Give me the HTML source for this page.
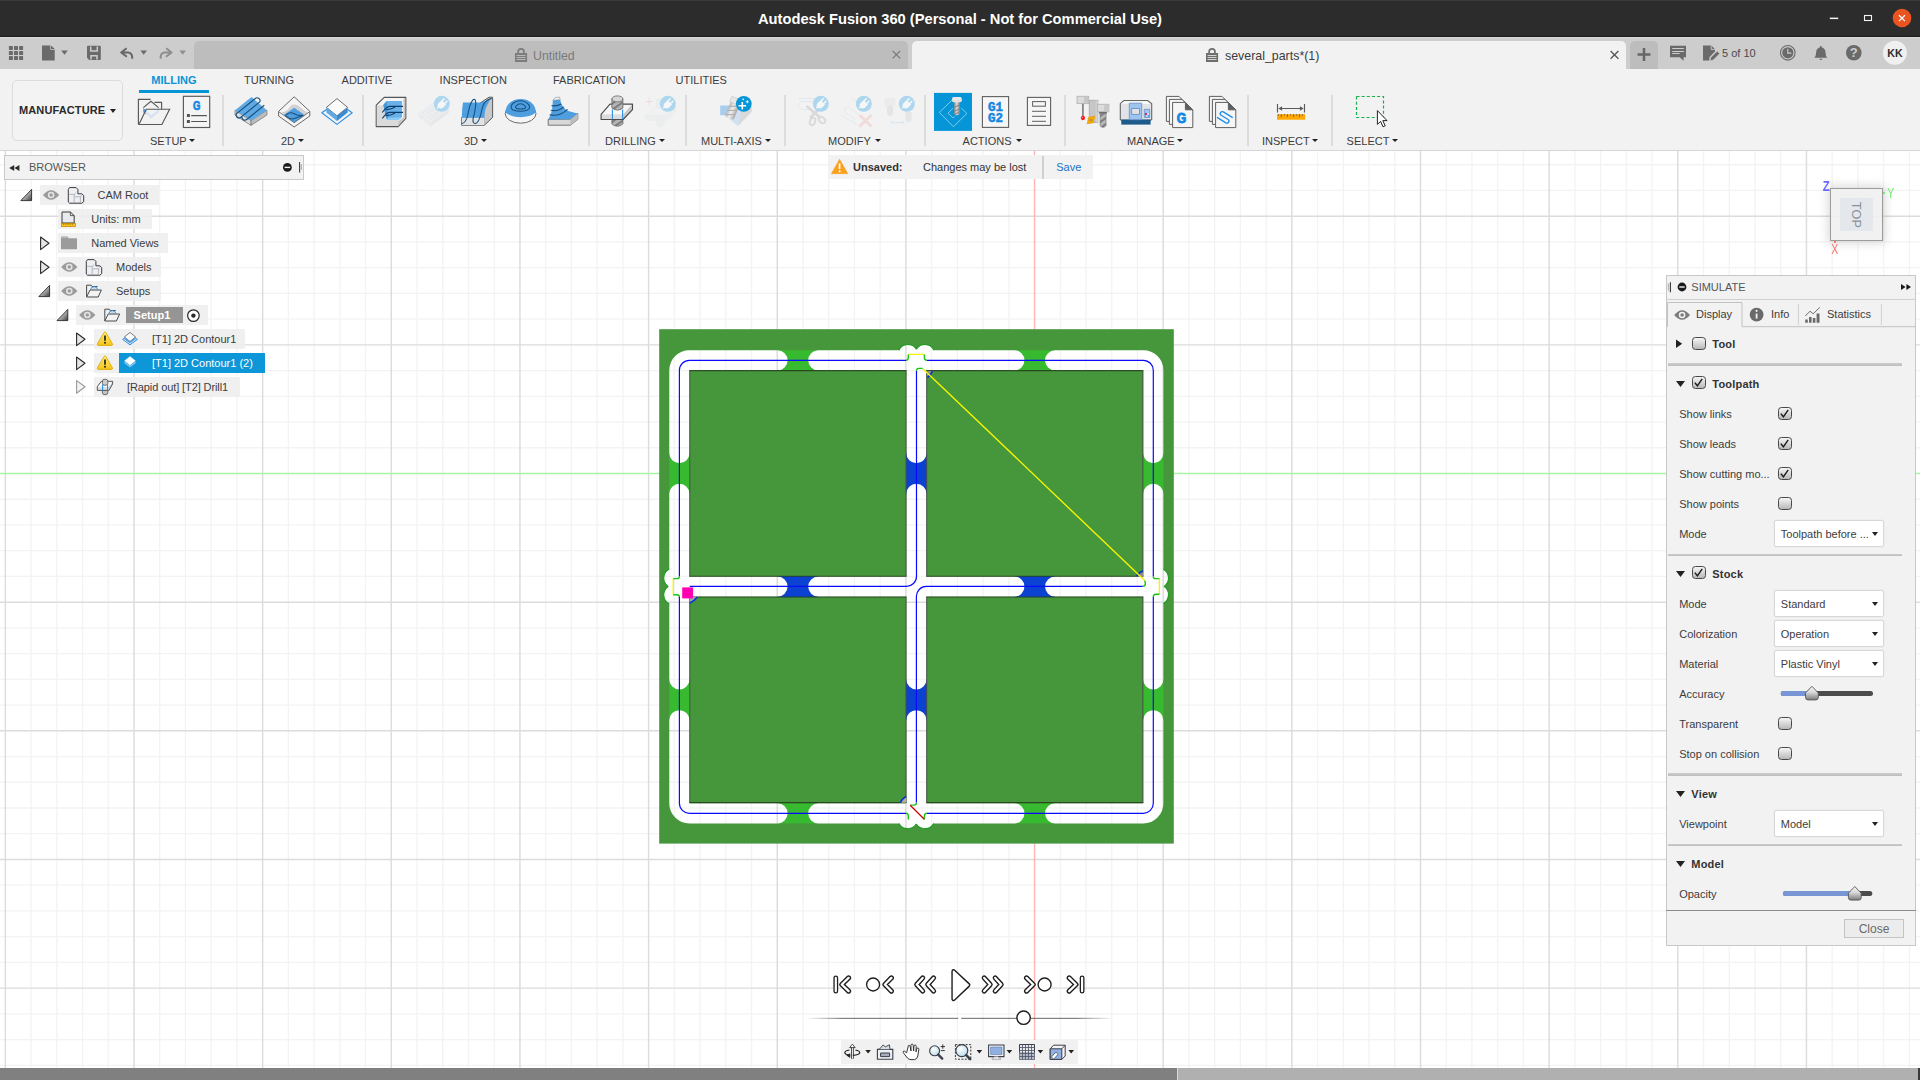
<!DOCTYPE html>
<html><head><meta charset="utf-8"><title>Fusion</title>
<style>
html,body{margin:0;padding:0;}
body{width:1920px;height:1080px;overflow:hidden;background:#fff;position:relative;font-family:"Liberation Sans",sans-serif;font-size:11px;color:#3c3c3c;}
.abs{position:absolute;}
svg{position:absolute;overflow:visible;}
#canvas{left:0;top:0;width:1920px;height:1080px;}
/* title bar */
#titlebar{position:absolute;left:0;top:0;width:1920px;height:37px;background:#2c2c2c;box-sizing:border-box;border-bottom:1px solid #1c1c1c;box-shadow:inset 0 1px 0 #3c3c3c;}
#titlebar .t{position:absolute;left:0;top:10px;width:1920px;text-align:center;color:#fff;font-weight:bold;font-size:14.7px;line-height:18px;}
/* tab bar */
#tabbar{position:absolute;left:0;top:37px;width:1920px;height:32px;background:#cdcdcd;box-shadow:inset 0 1px 0 #d8d8d8;}
.tab{position:absolute;top:4px;height:28px;border-radius:5px 5px 0 0;}
/* toolbar */
#toolbar{position:absolute;left:0;top:69px;width:1920px;height:81px;background:#f2f2f2;border-bottom:1px solid #d6d6d6;}
.tl{position:absolute;white-space:nowrap;line-height:13px;font-size:11px;color:#3c3c3c;}
.sep{position:absolute;top:26px;height:51px;width:2px;background:#dcdcdc;}
.arr{position:absolute;width:0;height:0;border-left:3px solid transparent;border-right:3px solid transparent;border-top:3.5px solid #222;}
/* browser */
#brhead{position:absolute;left:4px;top:155px;width:300px;height:25px;background:#f2f2f2;border:1px solid #c9c9c9;box-sizing:border-box;}
.rowbg{position:absolute;height:19.5px;background:rgba(238,238,238,.88);}
.rt{position:absolute;white-space:nowrap;font-size:11px;line-height:13px;color:#3c3c3c;}
/* simulate panel */
#sim{position:absolute;left:1666px;top:275px;width:250px;height:671.300px;background:#f2f2f2;border:1px solid #c8c8c8;box-sizing:border-box;}
.sl{position:absolute;white-space:nowrap;font-size:11px;line-height:13px;color:#3c3c3c;}
.sb{font-weight:bold;color:#333;letter-spacing:.2px}
.ck{position:absolute;width:13.600px;height:13px;box-sizing:border-box;border:1.400px solid #484848;border-radius:3.400px;background:linear-gradient(#f6f6f6,#b8b8b8);}
.dd{position:absolute;left:1773.500px;width:110px;height:27px;box-sizing:border-box;border:1.500px solid #d8d8d8;border-radius:2.200px;background:#fff;box-shadow:0 0 0 .500px #e8e8e8;}
.dd span{position:absolute;left:6.300px;top:6.500px;font-size:11px;line-height:13px;color:#3c3c3c;white-space:nowrap}
.dd i{position:absolute;right:4.800px;top:10.500px;width:0;height:0;border-left:3px solid transparent;border-right:3px solid transparent;border-top:4px solid #222;}
.hsep{position:absolute;left:1668px;width:233.500px;height:2.600px;background:linear-gradient(#cdcdcd,#bdbdbd);}

</style></head>
<body>
<svg id="canvas" width="1920" height="1080" viewBox="0 0 1920 1080">
<path d="M31.08 151V1068M56.81 151V1068M82.54 151V1068M108.27 151V1068M159.73 151V1068M185.46 151V1068M211.19 151V1068M236.92 151V1068M288.38 151V1068M314.11 151V1068M339.84 151V1068M365.57 151V1068M417.03 151V1068M442.76 151V1068M468.49 151V1068M494.22 151V1068M545.68 151V1068M571.41 151V1068M597.14 151V1068M622.87 151V1068M674.33 151V1068M700.06 151V1068M725.79 151V1068M751.52 151V1068M802.98 151V1068M828.71 151V1068M854.44 151V1068M880.17 151V1068M931.63 151V1068M957.36 151V1068M983.09 151V1068M1008.82 151V1068M1060.28 151V1068M1086.01 151V1068M1111.74 151V1068M1137.47 151V1068M1188.93 151V1068M1214.66 151V1068M1240.39 151V1068M1266.12 151V1068M1317.58 151V1068M1343.31 151V1068M1369.04 151V1068M1394.77 151V1068M1446.23 151V1068M1471.96 151V1068M1497.69 151V1068M1523.42 151V1068M1574.88 151V1068M1600.61 151V1068M1626.34 151V1068M1652.07 151V1068M1703.53 151V1068M1729.26 151V1068M1754.99 151V1068M1780.72 151V1068M1832.18 151V1068M1857.91 151V1068M1883.64 151V1068M1909.37 151V1068M0 164.74H1920M0 190.47H1920M0 241.93H1920M0 267.66H1920M0 293.39H1920M0 319.12H1920M0 370.58H1920M0 396.31H1920M0 422.04H1920M0 447.77H1920M0 499.23H1920M0 524.96H1920M0 550.69H1920M0 576.42H1920M0 627.88H1920M0 653.61H1920M0 679.34H1920M0 705.07H1920M0 756.53H1920M0 782.26H1920M0 807.99H1920M0 833.72H1920M0 885.18H1920M0 910.91H1920M0 936.64H1920M0 962.37H1920M0 1013.83H1920M0 1039.56H1920M0 1065.29H1920" stroke="#f3f3f3" stroke-width="1.3" fill="none"/>
<path d="M5.35 151V1068M134 151V1068M262.65 151V1068M391.3 151V1068M519.95 151V1068M648.6 151V1068M777.25 151V1068M905.9 151V1068M1163.2 151V1068M1291.85 151V1068M1420.5 151V1068M1549.15 151V1068M1677.8 151V1068M1806.45 151V1068M0 216.2H1920M0 344.85H1920M0 602.15H1920M0 730.8H1920M0 859.45H1920M0 988.1H1920" stroke="#dcdcdc" stroke-width="1.45" fill="none"/>
<path d="M1034.55 151V1068" stroke="#ffb3b3" stroke-width="1.4" fill="none"/>
<path d="M0 473.5H1920" stroke="#a6f5a6" stroke-width="1.4" fill="none"/>
<defs><mask id="cut" maskUnits="userSpaceOnUse" x="650" y="320" width="540" height="540">
<rect x="650" y="320" width="540" height="540" fill="#fff"/>
<path d="M679.4 453.05V370.3A10 10 0 0 1 689.4 360.3H777.5M1055.15 360.3H1143.3A10 10 0 0 1 1153.3 370.3V453.05M1153.3 720.25V803.3A10 10 0 0 1 1143.3 813.3H1055.15M777.5 813.3H689.4A10 10 0 0 1 679.4 803.3V720.25M818.3 360.3H1014.35M818.3 813.3H1014.35M679.4 493.85V679.45M1153.3 493.85V679.45M679.4 586.6H777.5M818.3 586.6H1014.35M1055.15 586.6H1153.3M916.4 360.3V453.05M916.4 493.85V679.45M916.4 720.25V813.3" stroke="#000" stroke-width="20.2" stroke-linecap="round" fill="none"/>
<circle cx="907.9" cy="354.6" r="10.1" fill="#000"/>
<circle cx="924.9" cy="354.6" r="10.1" fill="#000"/>
<circle cx="907.8" cy="818.6" r="10.1" fill="#000"/>
<circle cx="924.8" cy="818.6" r="10.1" fill="#000"/>
<circle cx="673.8" cy="578.1" r="10.1" fill="#000"/>
<circle cx="673.8" cy="594.8" r="10.1" fill="#000"/>
<circle cx="1158.4" cy="578.1" r="10.1" fill="#000"/>
<circle cx="1158.4" cy="594.7" r="10.1" fill="#000"/>
</mask></defs>
<g mask="url(#cut)">
<rect x="659.2" y="329.2" width="514.6" height="514.4" fill="#46963c"/>
<rect x="777.5" y="350.2" width="40.8" height="20.2" fill="#37ba2f"/>
<rect x="1014.35" y="350.2" width="40.8" height="20.2" fill="#37ba2f"/>
<rect x="777.5" y="576.1" width="40.8" height="21" fill="#0c42d2"/>
<rect x="1014.35" y="576.1" width="40.8" height="21" fill="#0c42d2"/>
<rect x="777.5" y="803.2" width="40.8" height="20.2" fill="#37ba2f"/>
<rect x="1014.35" y="803.2" width="40.8" height="20.2" fill="#37ba2f"/>
<rect x="669.3" y="453.05" width="20.2" height="40.8" fill="#37ba2f"/>
<rect x="669.3" y="679.45" width="20.2" height="40.8" fill="#37ba2f"/>
<rect x="905.9" y="453.05" width="21" height="40.8" fill="#0c42d2"/>
<rect x="905.9" y="679.45" width="21" height="40.8" fill="#0c42d2"/>
<rect x="1143.2" y="453.05" width="20.2" height="40.8" fill="#37ba2f"/>
<rect x="1143.2" y="679.45" width="20.2" height="40.8" fill="#37ba2f"/>
</g>
<path d="M689.4 370.65H906.4M689.4 576.25H906.4" stroke="#24401c" stroke-width="1.1" stroke-opacity=".9" fill="none"/>
<path d="M689.75 370.3V576.6M906.05 370.3V576.6" stroke="#4a5046" stroke-width="1.1" stroke-opacity=".85" fill="none"/>
<path d="M689.4 597.05H906.4M689.4 802.65H906.4" stroke="#24401c" stroke-width="1.1" stroke-opacity=".9" fill="none"/>
<path d="M689.75 596.7V803M906.05 596.7V803" stroke="#4a5046" stroke-width="1.1" stroke-opacity=".85" fill="none"/>
<path d="M926.3 370.65H1143.2M926.3 576.25H1143.2" stroke="#24401c" stroke-width="1.1" stroke-opacity=".9" fill="none"/>
<path d="M926.65 370.3V576.6M1142.85 370.3V576.6" stroke="#4a5046" stroke-width="1.1" stroke-opacity=".85" fill="none"/>
<path d="M926.3 597.05H1143.2M926.3 802.65H1143.2" stroke="#24401c" stroke-width="1.1" stroke-opacity=".9" fill="none"/>
<path d="M926.65 596.7V803M1142.85 596.7V803" stroke="#4a5046" stroke-width="1.1" stroke-opacity=".85" fill="none"/>
<g fill="none" stroke="#1e9e1e" stroke-width="1.15">
<path d="M898.81 350.2A10.1 10.1 0 0 1 916.4 349.14"/>
<path d="M916.4 349.14A10.1 10.1 0 0 1 933.99 350.2"/>
<path d="M916.3 824.06A10.1 10.1 0 0 1 898.91 823.4"/>
<path d="M933.69 823.4A10.1 10.1 0 0 1 916.3 824.06"/>
<path d="M668.12 586.45A10.1 10.1 0 0 1 669.3 569.06"/>
<path d="M669.3 603.84A10.1 10.1 0 0 1 668.12 586.45"/>
<path d="M1163.4 569.32A10.1 10.1 0 0 1 1164.15 586.4"/>
<path d="M1164.15 586.4A10.1 10.1 0 0 1 1163.4 603.48"/>
</g>
<path d="M906.2 360.3 H689.4 A10 10 0 0 0 679.4 370.3 V576.4M679.4 597 V803.3 A10 10 0 0 0 689.4 813.3 H906M926.7 813.3 H1143.3 A10 10 0 0 0 1153.3 803.3 V597M1153.3 576.4 V370.3 A10 10 0 0 0 1143.3 360.3 H926.7M916.5 370.8 V576.5 A10 10 0 0 1 906.4 586.4 H689.7M1142.8 586.4 H926.3 A10 10 0 0 0 916.4 596.7 V802.8" stroke="#0a0aff" stroke-width="1.2" fill="none"/>
<path d="M927 371H932.3Q931 375 927.3 377.5Z" fill="#8d8d8d"/><path d="M932.3 371Q931 375.5 927.3 377.5" stroke="#0a30d4" stroke-width="1.45" fill="none"/>
<path d="M1143 576.4V571Q1139 572.5 1136.5 576.4Z" fill="#8d8d8d"/><path d="M1143 571Q1138.5 572.5 1136.5 576.4" stroke="#0a30c0" stroke-width="1.45" fill="none"/>
<path d="M906.2 802.8V796.5Q902 799 900.5 802.8Z" fill="#b0b0a0"/><path d="M906.2 796.5Q901.5 799 900.5 802.8" stroke="#0a30d4" stroke-width="1.45" fill="none"/>
<path d="M689.8 597H697Q695 601 689.8 603Z" fill="#9aa"/><path d="M697 597.3Q694.5 601 689.8 603" stroke="#0a30d4" stroke-width="1.6" fill="none"/>
<path d="M908.3 354.4H924.4 M673.3 578.6V594.8 M1159.4 578.6V594.3 M922.6 368.4L1144.7 580.6" stroke="#f4f400" stroke-width="1.4" fill="none"/>
<path d="M908.3 354.4V357.6Q908.3 360.3 906.2 360.3M924.4 354.4V357.6Q924.4 360.3 926.7 360.3M916.5 370.8Q916.5 368.4 918.8 368.4H922.6M673.3 578.6H676.8Q679.4 578.6 679.4 576.4M673.3 594.8H676.8Q679.4 594.8 679.4 597M1159.4 578.6H1155.8Q1153.3 578.6 1153.3 576.4M1159.4 594.3H1155.8Q1153.3 594.5 1153.3 597M1142.8 586.4Q1145.4 586.2 1145.4 583.5L1144.7 580.6M916.5 802.8Q916.4 805 914 805.1H910.2M906 813.3Q908.3 813.4 908.3 816V819.5M926.7 813.3Q924.4 813.4 924.4 816V819.4" stroke="#19c419" stroke-width="1.4" fill="none"/>
<path d="M910.2 805.2L924.3 819.3" stroke="#cc0000" stroke-width="1.25" fill="none"/>
<rect x="682.2" y="587.4" width="10.9" height="11" fill="#ff00b3"/>
<defs><linearGradient id="gSl" x1="0" y1="0" x2="1" y2="0"><stop offset="0" stop-color="#666" stop-opacity="0"/><stop offset=".12" stop-color="#666" stop-opacity=".9"/><stop offset=".88" stop-color="#666" stop-opacity=".9"/><stop offset="1" stop-color="#666" stop-opacity="0"/></linearGradient></defs>
<rect x="806" y="1017.800" width="307" height="1.100" fill="url(#gSl)"/>
<rect x="958.300" y="1016" width="2.900" height="4" fill="#fff"/>
<path d="M835.8 977.8V991.2M1082.1 977.8V991.2" stroke="#1e1e1e" stroke-width="4.800" fill="none" stroke-linecap="round" stroke-linejoin="round"/>
<path d="M835.8 977.8V991.2M1082.1 977.8V991.2" stroke="#fff" stroke-width="2.200" fill="none" stroke-linecap="round" stroke-linejoin="round"/>
<path d="M848.6 977.9L841.8 984.5L848.6 991.1M891.4 977.9L884.9 984.5L891.4 991.1M1026.5 977.9L1033.2 984.5L1026.5 991.1M1069.2 977.9L1076 984.5L1069.2 991.1" stroke="#1e1e1e" stroke-width="5.100" fill="none" stroke-linecap="round" stroke-linejoin="round"/>
<path d="M848.6 977.9L841.8 984.5L848.6 991.1M891.4 977.9L884.9 984.5L891.4 991.1M1026.5 977.9L1033.2 984.5L1026.5 991.1M1069.2 977.9L1076 984.5L1069.2 991.1" stroke="#fff" stroke-width="2.300" fill="none" stroke-linecap="round" stroke-linejoin="round"/>
<path d="M922.7 977.9L916.7 984.5L922.7 991.1" stroke="#1e1e1e" stroke-width="5.100" fill="none" stroke-linecap="round" stroke-linejoin="round"/>
<path d="M922.7 977.9L916.7 984.5L922.7 991.1" stroke="#fff" stroke-width="2.300" fill="none" stroke-linecap="round" stroke-linejoin="round"/>
<path d="M933.6 977.9L927.7 984.5L933.6 991.1" stroke="#1e1e1e" stroke-width="5.100" fill="none" stroke-linecap="round" stroke-linejoin="round"/>
<path d="M933.6 977.9L927.7 984.5L933.6 991.1" stroke="#fff" stroke-width="2.300" fill="none" stroke-linecap="round" stroke-linejoin="round"/>
<path d="M984.2 977.9L990.2 984.5L984.2 991.1" stroke="#1e1e1e" stroke-width="5.100" fill="none" stroke-linecap="round" stroke-linejoin="round"/>
<path d="M984.2 977.9L990.2 984.5L984.2 991.1" stroke="#fff" stroke-width="2.300" fill="none" stroke-linecap="round" stroke-linejoin="round"/>
<path d="M995.2 977.9L1001.2 984.5L995.2 991.1" stroke="#1e1e1e" stroke-width="5.100" fill="none" stroke-linecap="round" stroke-linejoin="round"/>
<path d="M995.2 977.9L1001.2 984.5L995.2 991.1" stroke="#fff" stroke-width="2.300" fill="none" stroke-linecap="round" stroke-linejoin="round"/>
<circle cx="873.1" cy="984.500" r="6.500" fill="#fff" stroke="#1e1e1e" stroke-width="1.350"/>
<circle cx="1044.6" cy="984.500" r="6.500" fill="#fff" stroke="#1e1e1e" stroke-width="1.350"/>
<path d="M953.600 971.300L968.200 985L953.600 998.900Z" stroke="#1e1e1e" stroke-width="4.500" fill="#1e1e1e" stroke-linejoin="round"/>
<path d="M953.600 971.300L968.200 985L953.600 998.900Z" stroke="#fff" stroke-width="1.700" fill="#fff" stroke-linejoin="round"/>
<circle cx="1023.600" cy="1017.700" r="6.700" fill="#fff" stroke="#1e1e1e" stroke-width="1.400"/>

</svg>
<!-- titlebar.html -->
<div id="titlebar">
  <div class="t">Autodesk Fusion 360 (Personal - Not for Commercial Use)</div>
  <svg style="left:1820px;top:5px" width="100" height="28" viewBox="1820 5 100 28">
    <rect x="1829.800" y="17.600" width="8.400" height="1.500" fill="#f4f4f4"/>
    <rect x="1864.500" y="15.500" width="7" height="5" fill="none" stroke="#f4f4f4" stroke-width="1.100"/>
    <circle cx="1902" cy="18" r="9.3" fill="#e95420"/>
    <path d="M1899 15.200l5.900 5.900M1904.900 15.200l-5.900 5.900" stroke="#fff" stroke-width="1.250" fill="none"/>
  </svg>
</div>
<!-- tabbar.html -->
<div id="tabbar">
  <svg style="left:0;top:0" width="200" height="32" viewBox="0 37 200 32">
    <g fill="#6a6a6a">
      <!-- grid icon -->
<rect x="8.9" y="45.9" width="4" height="4" rx=".6"/><rect x="14.0" y="45.9" width="4" height="4" rx=".6"/><rect x="19.1" y="45.9" width="4" height="4" rx=".6"/>
<rect x="8.9" y="51.0" width="4" height="4" rx=".6"/><rect x="14.0" y="51.0" width="4" height="4" rx=".6"/><rect x="19.1" y="51.0" width="4" height="4" rx=".6"/>
<rect x="8.9" y="56.1" width="4" height="4" rx=".6"/><rect x="14.0" y="56.1" width="4" height="4" rx=".6"/><rect x="19.1" y="56.1" width="4" height="4" rx=".6"/>
      <!-- file icon -->
      <path d="M42 45.5h8.3v4.2h4.4v10.8h-12.7z M51 45.5l3.8 3.6h-3.8z"/>
      <path d="M61.2 50.6h6.6l-3.3 4.2z"/>
      <!-- save icon -->
      <path d="M88 45.800h11.800q1 0 1 1v12.100q0 1-1 1h-10.600l-2.200-2.200v-10.900q0-1 1-1z"/>
      <path d="M140.4 50.6h6.6l-3.3 4.2z"/>
    </g>
    <path d="M90.700 46.400v4.600h6.600v-4.600M91 59.600v-3.800h6v3.800" stroke="#cdcdcd" stroke-width="1.500" fill="none"/>
    <!-- undo -->
    <path d="M126.600 48.200l-5.400 4.300 5.600 4.300M121.800 52.500h6q4.400 .300 4.400 5v1.200" stroke="#666" stroke-width="2" fill="none" stroke-linejoin="round"/>
    <!-- redo (disabled) -->
    <path d="M166.200 48.200l5.400 4.300-5.600 4.300M171 52.500h-6q-4.400 .300-4.400 5v1.200" stroke="#8e8e8e" stroke-width="2" fill="none" stroke-linejoin="round"/>
    <path d="M179.400 50.600h6.600l-3.300 4.200z" fill="#909090"/>
  </svg>
  <div class="tab" style="left:194px;width:714px;background:#bdbdbd;"></div>
  <div class="tab" style="left:912px;width:714px;background:#f2f2f2;"></div>
  <div class="tab" style="left:1630px;width:28px;background:#bdbdbd;border-radius:5px 5px 0 0"></div>
  <svg style="left:500px;top:0" width="1420" height="32" viewBox="500 37 1420 32">
    <!-- lock inactive -->
    <g fill="#7c7c7c">
      <path d="M515 53h12.100v8.900h-12.100z M517.300 53v-1.300a3.750 3.750 0 0 1 7.500 0v1.300h-1.700v-1.300a2.050 2.050 0 0 0-4.100 0v1.300z"/>
    </g>
    <path d="M516.600 55h8.900v1h-8.900zM516.600 57h8.900v1h-8.900zM516.600 59h8.900v1h-8.900z" fill="#b8b8b8"/>
    <g fill="#6e6e6e">
      <path d="M1206 53h12.100v8.900h-12.100z M1208.300 53v-1.300a3.750 3.750 0 0 1 7.500 0v1.300h-1.700v-1.300a2.050 2.050 0 0 0-4.100 0v1.300z"/>
    </g>
    <path d="M1207.600 55h8.900v1h-8.900zM1207.600 57h8.900v1h-8.900zM1207.600 59h8.900v1h-8.900z" fill="#d4d4d4"/>
    <!-- close x -->
    <path d="M892.6 50.8l7.6 7.6M900.2 50.8l-7.6 7.6" stroke="#777" stroke-width="1.2" fill="none"/>
    <path d="M1610.6 51l7.8 7.8M1618.4 51l-7.8 7.8" stroke="#555" stroke-width="1.3" fill="none"/>
    <!-- plus -->
    <path d="M1644 48v13M1637.5 54.500h13" stroke="#666" stroke-width="2.500" fill="none"/>
    <!-- comment -->
    <path d="M1670 45.800h16v11.400h-2.400v3.600l-4-3.600h-9.600z" fill="#6a6a6a"/>
    <path d="M1672.200 48.500h11.600M1672.200 51.500h11.600M1672.200 53.500h7.400" stroke="#cdcdcd" stroke-width="1"/>
    <!-- doc w/ pencil -->
    <path d="M1703 45.6h8.4l3.6 3.6v2.2l-5.6 5.8v3.2h-6.4z" fill="#6a6a6a"/>
    <path d="M1711.2 45.6v3.8h3.8" stroke="#cdcdcd" stroke-width=".9" fill="none"/>
    <path d="M1709.800 61l1-3.600 6.400-6.400 2.600 2.600-6.400 6.400z" fill="#6a6a6a" stroke="#cdcdcd" stroke-width=".8"/>
    <!-- clock -->
    <circle cx="1787.8" cy="52.8" r="7.3" fill="none" stroke="#6a6a6a" stroke-width="1.1"/>
    <circle cx="1787.8" cy="52.8" r="5.6" fill="#6a6a6a"/>
    <path d="M1787.8 48.8v4.3h3.6" stroke="#cdcdcd" stroke-width="1.1" fill="none"/>
    <!-- bell -->
    <path d="M1814.3 57.8q1.8-1.6 1.8-5.2q0-4.6 4.7-5.6q4.7 1 4.7 5.6q0 3.6 1.8 5.2z M1819 58.800h3.600q-1.800 2.600-3.600 0z M1820 46h1.6v1.4h-1.6z" fill="#6a6a6a"/>
    <!-- help -->
    <circle cx="1853.8" cy="52.8" r="7.8" fill="#6a6a6a"/>
    <text x="1853.8" y="57.4" font-size="13" font-weight="bold" fill="#cdcdcd" text-anchor="middle" font-family="Liberation Sans">?</text>
    <!-- KK -->
    <circle cx="1894.9" cy="52.8" r="12" fill="#f0f0f0"/>
    <text x="1894.900" y="56.600" font-size="10.600" font-weight="bold" fill="#2c2c2c" text-anchor="middle" font-family="Liberation Sans">KK</text>
  </svg>
  <div class="abs" style="left:533px;top:10.600px;font-size:12.3px;color:#7a7a7a;line-height:16px;">Untitled</div>
  <div class="abs" style="left:1225px;top:10.600px;font-size:12.4px;color:#3c3c3c;line-height:16px;">several_parts*(1)</div>
  <div class="abs" style="left:1722px;top:9px;font-size:11px;color:#4a4a4a;line-height:14px;">5 of 10</div>
</div>
<!-- toolbar.html -->
<div id="toolbar">
  <div class="abs" style="left:11.500px;top:11px;width:109px;height:58.500px;border:1.500px solid #dcdcdc;border-radius:5px;background:#f3f3f3;"></div>
  <div class="tl" style="left:19px;top:35px;font-weight:bold;font-size:11px;color:#2a2a2a;letter-spacing:.12px">MANUFACTURE</div>
  <div class="arr" style="left:109.5px;top:40px;border-left-width:3.2px;border-right-width:3.2px;border-top-width:4px"></div>
  <!-- tabs -->
  <div class="tl" style="left:151.3px;top:5px;font-weight:bold;color:#0696d7">MILLING</div>
  <div class="abs" style="left:139.300px;top:21px;width:70.200px;height:3px;background:#0696d7"></div>
  <div class="tl" style="left:244px;top:5px">TURNING</div>
  <div class="tl" style="left:341.6px;top:5px">ADDITIVE</div>
  <div class="tl" style="left:439.6px;top:5px">INSPECTION</div>
  <div class="tl" style="left:553px;top:5px">FABRICATION</div>
  <div class="tl" style="left:675.6px;top:5px">UTILITIES</div>
  <!-- group labels -->
  <div class="tl" style="left:150px;top:65.5px">SETUP</div><div class="arr" style="left:189.3px;top:69.6px"></div>
  <div class="tl" style="left:281px;top:65.5px">2D</div><div class="arr" style="left:298px;top:69.6px"></div>
  <div class="tl" style="left:464px;top:65.5px">3D</div><div class="arr" style="left:481.2px;top:69.6px"></div>
  <div class="tl" style="left:605px;top:65.5px">DRILLING</div><div class="arr" style="left:659px;top:69.6px"></div>
  <div class="tl" style="left:701px;top:65.5px">MULTI-AXIS</div><div class="arr" style="left:765.2px;top:69.6px"></div>
  <div class="tl" style="left:828px;top:65.5px">MODIFY</div><div class="arr" style="left:875px;top:69.6px"></div>
  <div class="tl" style="left:962.6px;top:65.5px">ACTIONS</div><div class="arr" style="left:1016px;top:69.6px"></div>
  <div class="tl" style="left:1127px;top:65.5px">MANAGE</div><div class="arr" style="left:1177.4px;top:69.6px"></div>
  <div class="tl" style="left:1262px;top:65.5px">INSPECT</div><div class="arr" style="left:1311.8px;top:69.6px"></div>
  <div class="tl" style="left:1346.6px;top:65.5px">SELECT</div><div class="arr" style="left:1391.8px;top:69.6px"></div>
  <svg style="left:0;top:0" width="1920" height="81" viewBox="0 69 1920 81">
<defs>
  <linearGradient id="gGray" x1="0" y1="0" x2="1" y2="0"><stop offset="0" stop-color="#9a9a9a"/><stop offset=".5" stop-color="#e2e2e2"/><stop offset="1" stop-color="#8a8a8a"/></linearGradient>
</defs>
<!-- SETUP: folder -->
<g stroke="#585858" stroke-width="1.150" fill="none" stroke-linejoin="miter">
  <path d="M138.400 124.500V99.400H150.600M154.400 102.400H161.600V109.200"/>
  <path d="M143.200 108v4.200l2.400 2.200 1.400-3.400z M158.800 108v2l-1 .600z" fill="#4a9fe6" stroke="none"/>
  <path d="M146 111.900L151.100 117L158.600 111" stroke="#cddff0" stroke-width="2.500"/>
  <path d="M143.400 107.600L150.900 101.250L158.600 107.600"/>
  <path d="M138.400 124.500H161.900L169.600 109.200H146.200L139.300 123.800" fill="#f2f2f2" fill-opacity=".3"/>
</g>
<!-- SETUP: G doc -->
<rect x="183.400" y="96.300" width="26.300" height="31.200" fill="#f4f4f4" stroke="#585858" stroke-width="1.150"/>
<text transform="translate(196.600 109.900) scale(.78 1)" font-family="Liberation Sans" font-weight="bold" font-size="12.200" fill="#1287e6" stroke="#1287e6" stroke-width=".7" text-anchor="middle">G</text>
<path d="M186.900 114.100h3v3h-3zM186.900 120.100h3v3h-3z" fill="#555"/>
<path d="M191.200 115.600h15.700M191.200 121.500h15.700" stroke="#555" stroke-width="1.050"/>

<!-- 2D: adaptive (slab with zigzag) -->
<g stroke-linejoin="round">
  <path d="M235 110.300l16 10.300v4.800l-16-10.300z" fill="#dedede" stroke="#7a7a7a" stroke-width=".8"/>
  <path d="M251 120.600l15.900-10.400v4.800l-15.900 10.400z" fill="#bdbdbd" stroke="#7a7a7a" stroke-width=".8"/>
  <path d="M235 110.300l16.500-13.300 15.400 13.200-15.900 10.400z" fill="#5ea9e4"/>
  <path d="M238.200 112.400L255 98.800A2.900 2.900 0 0 1 259.800 101.900L242.200 116.100A2.900 2.900 0 0 0 247 119.200L264.300 105.200 M238.200 112.400a2.900 2.900 0 0 0 1.500 5.600l2.500-1.900" fill="none" stroke="#17507e" stroke-width="1.150"/>
</g>
<!-- 2D: pocket -->
<g stroke-linejoin="round">
  <path d="M278.6 111.400l15.600-14.600 15.600 14.600v4.600l-15.600 11-15.600-11z" fill="#f4f4f4" stroke="#6a6a6a" stroke-width="1"/>
  <path d="M281.500 112.500q6-1 9.500-7 2.500-2.200 7 0l9.600 7.500-13.400 9.800z" fill="#d2d2d2"/>
  <path d="M283.500 115.200l10.700-7.500 10.700 7.500-10.700 7.800z" fill="#4f9fe0"/>
  <path d="M285.500 115.400q4-4.200 8.700-1.700 4.700 2.600 8.800 1.700M285.500 115.600q4.400 4.600 8.800 3 4.700-1.700 8.600-3" fill="none" stroke="#17507e" stroke-width="1.1"/>
  <path d="M278.600 111.600l15.600 11 15.600-11" fill="none" stroke="#6a6a6a" stroke-width=".9"/>
</g>
<!-- 2D: contour -->
<g stroke-linejoin="round">
  <path d="M321.800 112.800l15.200 11.600 15.200-11.600-15.200-10.600z" fill="none" stroke="#2b8fe6" stroke-width="1.1"/>
  <path d="M326.400 107.400l10.600-8.800 10.600 8.800-10.600 8.400z" fill="#fbfbfb" stroke="#6e6e6e" stroke-width="1"/>
  <path d="M326.400 107.400v5.200l10.600 8.400v-5.200z" fill="#5ea9e4"/>
  <path d="M337 115.800v5.200l10.600-8.400v-5.200z" fill="#3b8bd0"/>
</g>

<!-- 3D: adaptive clearing -->
<g stroke-linejoin="round">
  <path d="M376.250 105.200L384.200 97.300H405.800V118.400L398.050 126.600H376.250Z" fill="#f5f5f5" stroke="#555" stroke-width="1.150"/>
  <path d="M376.800 105.600L383.050 105.300L385.600 116.250L386.800 120H398.750L397.800 121.200V126H376.800Z" fill="#dadada"/>
  <path d="M403.400 99L405.200 98.100V118.100L398.100 126V121.200L403.400 117.700Z" fill="#c6c6c6"/>
  <path d="M386.600 101H402V117.200L398.750 119.800H387L385.600 116.250L383.300 105Z" fill="#69b1e8"/>
  <path d="M383.300 105L386.600 101.250L388 116.250L387 119.800L385.600 116.250Z" fill="#4797d6"/>
  <path d="M388 118.100L401.600 117.200L398.750 119.800H387Z" fill="#8dcbf9"/>
  <path d="M403 106.400H389.500Q386.500 106.600 382.300 112.500M395 107.300Q390.500 109.500 386.200 109.700M403 112.400H389.500Q386.500 112.600 382.300 118.500M395 113.300Q390.500 115.500 386.200 115.700" fill="none" stroke="#0d3f6e" stroke-width="1.200"/>
</g>
<!-- 3D: disabled (plug) -->
<g opacity=".55" stroke-linejoin="round">
  <path d="M418.400 113L430.600 122.300V126.500L418.400 117Z" fill="#e4e7ea"/>
  <path d="M430.600 122.300L448.900 108.750V113L430.600 126.500Z" fill="#dcdfe3"/>
  <path d="M418.400 113L434.400 102.200L448.900 108.750L430.600 122.300Z" fill="#eceef1" stroke="#dde1e6" stroke-width=".6"/>
  <path d="M422.500 112.800L434.300 104.800L444.800 109.600L431.300 119.500Z M426.500 112.600L434.200 107.400L440.800 110.400L432 116.800Z M430 112.400L434 109.700L437.400 111.200L432.800 114.500Z" fill="none" stroke="#cfd6e0" stroke-width=".7"/>
</g>
<circle cx="441.800" cy="103.800" r="8" fill="#acd7ef"/>
<path d="M437.600 107.800l2-2 M439 103.800l2.600-2.600 3.400 3.400-2.600 2.600q-2 1.200-3.400-.4-1.400-1.400 0-3z M442.400 100.600l1.800-1.800 M445 103.200l1.800-1.800" stroke="#f6f6f6" stroke-width="1.500" fill="#f6f6f6" stroke-linecap="round"/>

<!-- 3D: parallel -->
<g stroke-linejoin="round">
  <path d="M461.600 125.200v-7.600l5.600-6 21.800-14.400h3.600v20.200l-8.200 7.800z" fill="#c9c9c9" stroke="#5a5a5a" stroke-width="1"/>
  <path d="M461.800 118h22.600v7" fill="#e3e3e3" stroke="#777" stroke-width=".6"/>
  <path d="M461.800 125v-7h22.600v7z" fill="#e3e3e3"/>
  <path d="M463 102.500h16.500q6-.3 11-3.500l-3.400 6.500q-2.600 4.500-2.700 12.300h-22.600q.1-9 1.200-15.300z" fill="#4f9fe0"/>
  <path d="M461.600 123.800q4.600-1 6.400-9.800 1.600-10.400 5-14.200 2.800-2 2.800 4.200-1 9.400-2.600 14-1 6 2.400 5.500 3.400-1 5.600-11 1.600-8 4-10.400 2.400-2.700 6.400-3.700" fill="none" stroke="#17507e" stroke-width="1.1"/>
</g>
<!-- 3D: contour (dome) -->
<g>
  <ellipse cx="520.600" cy="113.600" rx="15.400" ry="9.600" fill="#f6f6f6" stroke="#6a6a6a" stroke-width="1"/>
  <path d="M505.400 112.600q.6-9.400 8.800-12.600 6.400-2.200 12.800 0 8.400 3.200 9 12.600-6 4.600-15.200 4.600-9.400 0-15.400-4.600z" fill="#4f9fe0"/>
  <path d="M520.500 100.800q4.800 0 8 3.600 2.600 3.400-1 5.600-7 2.600-14.600 0-3.200-2.200-.8-5.600 3.400-3.600 8.400-3.600z M520.500 103.800q2.600 0 4.600 2.200 1.400 1.800-.8 2.600-3.800.8-7.600 0-2-1 -.6-2.600 1.800-2.200 4.400-2.200z" fill="none" stroke="#17507e" stroke-width="1.100"/>
</g>
<!-- 3D: ramp/steep -->
<g stroke-linejoin="round">
  <path d="M548.200 119.400l22.200-.2 7.400-5.800v6l-7.400 5.800h-22.200z" fill="#d8d8d8" stroke="#6a6a6a" stroke-width=".9"/>
  <path d="M570.400 119.200l7.400-5.800v6l-7.400 5.800z" fill="#bcbcbc"/>
  <path d="M552.800 100.400l2.400-2.800 4.400-.6.600 2.800q1.200 7.600 8 11.200l9.400 2.400-7.200 5.800-22.200.2q3-4.200 3.800-9.600.8-5.400.8-9.400z" fill="#4f9fe0"/>
  <path d="M552.800 100.400l2.400-2.800 4.400-.6.600 2.800q-3.400-.2-7.400.6z" fill="#f4f4f4" stroke="#888" stroke-width=".5"/>
  <path d="M551.600 105.600q5.400 1 9.600-1.600M550.800 110.200q7.200 1.600 13-3.400M549.600 114.800q10 2.200 18-5.400" fill="none" stroke="#17507e" stroke-width="1.100"/>
</g>
</svg>
<svg style="left:0;top:0" width="1920" height="81" viewBox="0 69 1920 81">
<defs>
  <linearGradient id="gTool2" x1="0" y1="0" x2="1" y2="0"><stop offset="0" stop-color="#b8b8b8"/><stop offset=".45" stop-color="#f0f0f0"/><stop offset="1" stop-color="#aaaaaa"/></linearGradient>
  <linearGradient id="gTool" x1="0" y1="0" x2="1" y2="0"><stop offset="0" stop-color="#8c8c8c"/><stop offset=".45" stop-color="#dedede"/><stop offset="1" stop-color="#7c7c7c"/></linearGradient>
  <pattern id="flute" width="5" height="5" patternUnits="userSpaceOnUse" patternTransform="rotate(-35)"><rect width="5" height="5" fill="#b5b5b5"/><rect width="5" height="2" fill="#7d7d7d"/></pattern>
</defs>
<!-- DRILLING: drill -->
<g stroke-linejoin="round">
  <path d="M611.900 119h11v5q-5.500 4.400-11 0z" fill="url(#flute)" stroke="#666" stroke-width=".8"/>
  <path d="M610 104.100H632.500L623.100 114.400H601.100Z" fill="#f6f6f6"/>
  <path d="M601.100 114.400H623.100V119.500H601.100Z" fill="#dcdcdc"/>
  <path d="M623.100 114.400L632.500 104.100V109.700L623.100 119.500Z" fill="#c8c8c8"/>
  <path d="M610 104.100H632.500V109.700L623.100 119.500H601.100V114.400Z" fill="none" stroke="#4a4a4a" stroke-width="1.100"/>
  <path d="M611.900 98.900h11v9q-5.500 4.400-11 0z" fill="url(#flute)" stroke="#666" stroke-width=".8"/>
  <ellipse cx="617.400" cy="98.900" rx="5.500" ry="3" fill="#d6d6d6" stroke="#666" stroke-width=".8"/>
  <path d="M612.400 109.600v9.600M622.600 109.600v9.600" stroke="#2b8fe6" stroke-width="1.100"/>
</g>
<!-- DRILLING: disabled -->
<g opacity=".3">
  <path d="M645.600 115.600l9-8h21l-8.400 8z" fill="#eef0f2" stroke="#d2d6da" stroke-width=".8"/>
  <path d="M645.600 115.600h21.600l8.400-8v4.400l-8.400 8h-21.600z" fill="#e4e6e8" stroke="#d2d6da" stroke-width=".8"/>
  <path d="M656 98.500h8.400v10h-8.400zM656 118h8.400v7.500l-4.200 2-4.200-2z" fill="#dcdfe2"/>
  <path d="M645.600 101.500h7M649.100 98v7" stroke="#f0a0a8" stroke-width="1"/>
</g>
<circle cx="667.800" cy="103.800" r="8" fill="#acd7ef"/>
<path d="M663.600 107.800l2-2 M665 103.800l2.600-2.600 3.400 3.400-2.600 2.600q-2 1.200-3.400-.4-1.400-1.400 0-3z M668.400 100.600l1.800-1.800 M671 103.200l1.800-1.800" stroke="#f6f6f6" stroke-width="1.500" fill="#f6f6f6" stroke-linecap="round"/>

<!-- MULTI-AXIS -->
<g stroke-linejoin="round">
  <path d="M720.200 105.400h8.600l6 0 5.800 6-3.600 8.200-10.200-4.400h-6.600z" fill="#a9cdee"/>
  <path d="M736.800 108l14.800-1.600v5.400l-13.600 14.200-10.600-8.600z" fill="#cfe1f2"/>
  <path d="M742 107.400l9.600-1v5.400l-13.600 14.200z" fill="#d9d9d9"/>
  <g transform="rotate(22 733 108)">
    <path d="M728.500 99h9.500v19q-4.750 3-9.500 0z" fill="url(#gTool2)"/>
    <path d="M728.500 108l9.500-4M728.500 112.500l9.500-4M728.500 117l9.500-4" stroke="#b2b2b2" stroke-width="1.200"/>
    <path d="M727.500 97.500h11.500v6h-11.500z" fill="#e6e6e6" stroke="#c2c2c2" stroke-width=".5"/>
  </g>
</g>
<circle cx="743.800" cy="103.800" r="7.900" fill="#0696d7"/>
<path d="M742.300 102v7.600M738.500 105.800h7.600" stroke="#fff" stroke-width="1.600"/>
<path d="M747.300 100.300v3M745.800 101.800h3M743.300 98.600v1.600M742.500 99.400h1.600" stroke="#fff" stroke-width=".9"/>

<!-- MODIFY (3 disabled) -->
<g opacity=".28" fill="none">
  <path d="M799 98.500h16M815 101.500h-12.500a4 4 0 0 0 0 8h9" stroke="#b8d4ec" stroke-width="1"/>
  <path d="M806.500 106l14 12M822 106l-12 12" stroke="#9a9a9a" stroke-width="2.600"/>
  <ellipse cx="812.500" cy="121.500" rx="2.600" ry="3.800" stroke="#9a9a9a" stroke-width="1.800" transform="rotate(20 812.500 121.500)"/>
  <ellipse cx="822" cy="120" rx="2.600" ry="3.800" stroke="#9a9a9a" stroke-width="1.800" transform="rotate(-50 822 120)"/>
</g>
<circle cx="820.800" cy="103.800" r="8" fill="#acd7ef"/>
<path d="M816.600 107.800l2-2 M818 103.800l2.600-2.600 3.400 3.400-2.600 2.600q-2 1.200-3.400-.4-1.400-1.400 0-3z M821.400 100.600l1.800-1.800 M824 103.200l1.800-1.800" stroke="#f6f6f6" stroke-width="1.500" fill="#f6f6f6" stroke-linecap="round"/>
<g opacity=".28" fill="none">
  <path d="M851 97.500l8 6M841 115l16 9.500M859 115l-9.500-7a3 3 0 0 0-4 4.500l10 7.500" stroke="#b8d4ec" stroke-width="1"/>
  <path d="M859.500 115l12 11.500M871.500 115l-12 11.500" stroke="#f0a0a0" stroke-width="3"/>
</g>
<circle cx="863.800" cy="103.800" r="8" fill="#acd7ef"/>
<path d="M859.600 107.800l2-2 M861 103.800l2.600-2.600 3.400 3.400-2.600 2.600q-2 1.200-3.400-.4-1.400-1.400 0-3z M864.400 100.600l1.800-1.800 M867 103.200l1.800-1.800" stroke="#f6f6f6" stroke-width="1.500" fill="#f6f6f6" stroke-linecap="round"/>
<g opacity=".3">
  <path d="M884.500 98h11v8h-11z" fill="#dcdcdc"/><path d="M887 106h6v8.500l-3 2-3-2z" fill="#c8c8c8"/>
  <path d="M905.500 112h6v8.500l-3 2-3-2z" fill="#c8c8c8"/>
  <path d="M891 122.500h13M893 120.500l-2 2 2 2M902 120.500l2 2-2 2" stroke="#9ccdf0" stroke-width="1" fill="none"/>
</g>
<circle cx="906.800" cy="103.800" r="8" fill="#acd7ef"/>
<path d="M902.600 107.800l2-2 M904 103.800l2.600-2.600 3.400 3.400-2.600 2.600q-2 1.200-3.400-.4-1.400-1.400 0-3z M907.400 100.600l1.800-1.800 M910 103.200l1.800-1.800" stroke="#f6f6f6" stroke-width="1.500" fill="#f6f6f6" stroke-linecap="round"/>

<!-- ACTIONS: simulate (selected) -->
<rect x="934" y="92.900" width="38" height="38" fill="#0696d7"/>
<path d="M952 100.200L939.300 112.400L953.400 126.700L966.900 113.500L961.200 108" fill="none" stroke="#7ccbf0" stroke-width="1"/>
<path d="M953 108.300L948 113.200L953.100 117.900L954.800 116.400" fill="none" stroke="#7ccbf0" stroke-width="1"/>
<path d="M954.200 101.500h5.700v12.600q-2.850 2.400-5.700 0z" fill="url(#gTool)"/>
<path d="M954.200 107.600l5.700-3M954.200 111.400l5.700-3M954.600 114.400l5.300-2.800" stroke="#8a8a8a" stroke-width="1.100"/>
<rect x="952" y="97.100" width="9.800" height="5.100" rx="1.800" fill="#e9e9e9"/>
<path d="M952.200 100.200q4.700 1.600 9.400 0" fill="none" stroke="#cfcfcf" stroke-width=".6"/>
<!-- ACTIONS: G1G2 -->
<rect x="982.400" y="96.600" width="26.200" height="30.800" fill="#f6f6f6" stroke="#5f5f5f" stroke-width="1.100"/>
<text x="995.600" y="111" font-family="Liberation Mono" font-weight="bold" font-size="12.500" fill="#1587e0" stroke="#1587e0" stroke-width=".5" text-anchor="middle">G1</text>
<text x="995.600" y="122.200" font-family="Liberation Mono" font-weight="bold" font-size="12.500" fill="#1587e0" stroke="#1587e0" stroke-width=".5" text-anchor="middle">G2</text>
<!-- ACTIONS: setup sheet -->
<rect x="1027.400" y="97.400" width="23.200" height="28" fill="#f6f6f6" stroke="#5f5f5f" stroke-width="1.100"/>
<rect x="1032.600" y="101.600" width="12.800" height="4.600" fill="none" stroke="#5f5f5f" stroke-width="1"/>
<path d="M1032 111.300h14M1032 116.300h14M1032 121.300h14" stroke="#5f5f5f" stroke-width="1"/>

<!-- MANAGE: tool library -->
<g>
  <rect x="1077" y="96.200" width="11.750" height="7.500" fill="#dcdcdc" stroke="#a8a8a8" stroke-width=".7"/>
  <rect x="1084" y="96.500" width="4.500" height="6.900" fill="#c6c6c6"/>
  <path d="M1082.900 103.700v12.400" stroke="#7a7a7a" stroke-width="1.600"/>
  <circle cx="1082.900" cy="118" r="2.150" fill="#ff1a1a"/><circle cx="1082.400" cy="117.400" r=".6" fill="#ff9090"/>
  <rect x="1089.200" y="100.200" width="8.700" height="22.500" fill="#c6c6c6" stroke="#a4a4a4" stroke-width=".7"/>
  <rect x="1095.800" y="100.500" width="1.800" height="21.900" fill="#d4d4d4"/>
  <path d="M1088.500 117.300L1094.850 116.100L1093.400 122.700L1087.100 123.900Z" fill="#f5a800" stroke="#e09600" stroke-width=".5"/>
  <rect x="1089.900" y="119.200" width="1.900" height="1.800" fill="#a08858"/>
  <rect x="1097.200" y="104.200" width="11.700" height="7.700" fill="#dcdcdc" stroke="#a8a8a8" stroke-width=".7"/>
  <rect x="1104.200" y="104.500" width="4.400" height="7.100" fill="#c8c8c8"/>
  <rect x="1099.100" y="111.900" width="7.700" height="1.900" fill="#6a6a6a"/>
  <path d="M1100 113.800h6.100v12q-3.050 3.400-6.100 0z" fill="url(#flute)" stroke="#808080" stroke-width=".6"/>
</g>
<!-- MANAGE: machine -->
<g stroke-linejoin="round">
  <path d="M1120.300 103.600L1124 100.500H1147.400L1151.700 103.700V119.400L1150.600 120.400H1121.400L1120.300 119.400Z" fill="#e1e3e7" stroke="#666" stroke-width="1.100"/>
  <path d="M1121 103.800L1124.200 101.200H1147.200L1150.900 103.900Z" fill="#f8f8f8"/>
  <rect x="1121.300" y="119.500" width="29.300" height="5.100" fill="#1c5a8c"/>
  <rect x="1129.300" y="103.200" width="12.400" height="16.500" fill="#9ec5ee" stroke="#6a8ec8" stroke-width=".8"/>
  <rect x="1131.600" y="108.500" width="7.900" height="5.900" fill="#e0e2e6" stroke="#6a8ec8" stroke-width=".9"/>
  <rect x="1144.300" y="109.300" width="5.400" height="8.200" fill="#9ec5ee" stroke="#6a8ec8" stroke-width=".8"/>
  <rect x="1145" y="113.100" width="1.900" height="1.700" fill="#d01050"/>
  <path d="M1147.400 113.200h1.400v1.400h-1.400zM1146.200 115.400h1.300v1.200h-1.300z" fill="#fff"/><path d="M1145 115.600h1.100v1.100h-1.100zM1147.800 115.300h1.400v1.400h-1.400z" fill="#30a0ff"/>
</g>
<!-- MANAGE: G docs -->
<g stroke="#5f5f5f" stroke-width="1" fill="#f6f6f6" stroke-linejoin="miter">
  <path d="M1166.400 96.400h12.600l5.400 5.400v19.600h-18z"/>
  <path d="M1169.400 99.400h12.600l5.400 5.400v19.600h-18z"/>
  <path d="M1172.600 102.400h12.800l7.400 7.400v17.800h-20.200z"/>
  <path d="M1185.400 102.400l7.400 7.400h-7.400z" fill="#5f5f5f"/>
</g>
<text transform="translate(1181.500 123) scale(.82 1)" font-family="Liberation Sans" font-weight="bold" font-size="15" fill="#1287e6" stroke="#1287e6" stroke-width=".9" text-anchor="middle">G</text>
<!-- MANAGE: S docs -->
<g stroke="#5f5f5f" stroke-width="1" fill="#f6f6f6" stroke-linejoin="miter">
  <path d="M1209.400 96.400h12.600l5.400 5.400v19.600h-18z"/>
  <path d="M1212.400 99.400h12.600l5.400 5.400v19.600h-18z"/>
  <path d="M1215.600 102.400h12.800l7.400 7.400v17.800h-20.200z"/>
  <path d="M1228.400 102.400l7.400 7.400h-7.400z" fill="#5f5f5f"/>
</g>
<path d="M1217 117.400L1225.960 122.880A2 2 0 0 0 1228.060 119.480L1221.200 115.300A2 2 0 0 1 1223.330 111.900L1232.700 117.650" fill="none" stroke="#1f8ee8" stroke-width="1.300"/>

<!-- INSPECT: measure -->
<path d="M1277.500 104v8.600M1304.500 104v8.600M1280 108.500h22" stroke="#5a5a5a" stroke-width="1.150" fill="none"/>
<path d="M1278.300 108.500l3.800-2.300v4.600zM1303.700 108.500l-3.800-2.300v4.600z" fill="#5a5a5a"/>
<rect x="1277" y="114.200" width="28.100" height="5.500" fill="#ffa800"/>
<path d="M1278.500 114.200v1.400M1281.300 114.200v2.800M1284.400 114.200v1.400M1287.500 114.200v2.800M1290.600 114.200v1.400M1293.700 114.200v2.800M1296.600 114.200v1.400M1299.600 114.200v2.800M1302.400 114.200v1.400" stroke="#6a5a3a" stroke-width=".9"/>
<!-- SELECT -->
<rect x="1356.500" y="96.500" width="27" height="21" fill="none" stroke="#16b04a" stroke-width="1.200" stroke-dasharray="3 2.160"/>
<path d="M1377.400 110.600V124.400L1380.600 121.400L1383 126.800L1385.200 125.800L1382.800 120.600H1387Z" fill="#fff" stroke="#222" stroke-width="1" stroke-linejoin="round"/>
</svg>

  <!-- separators -->
  <div class="sep" style="left:222px"></div><div class="sep" style="left:362px"></div><div class="sep" style="left:588px"></div>
  <div class="sep" style="left:685px"></div><div class="sep" style="left:784px"></div><div class="sep" style="left:924px"></div>
  <div class="sep" style="left:1064px"></div><div class="sep" style="left:1247px"></div><div class="sep" style="left:1331px"></div>
</div>
<!-- browser.html -->
<div id="brhead"></div>
<div class="rt" style="left:29px;top:161px;color:#555;">BROWSER</div>
<!-- row backgrounds -->
<div class="rowbg" style="left:40px;top:185.2px;width:119.4px"></div>
<div class="rowbg" style="left:58px;top:209.2px;width:94px"></div>
<div class="rowbg" style="left:58px;top:233.2px;width:109.7px"></div>
<div class="rowbg" style="left:58px;top:257.2px;width:102.7px"></div>
<div class="rowbg" style="left:58px;top:281.2px;width:102.7px"></div>
<div class="rowbg" style="left:76px;top:305.2px;width:131.5px"></div>
<div class="rowbg" style="left:94px;top:329.2px;width:151px"></div>
<div class="rowbg" style="left:94px;top:353.2px;width:26px"></div>
<div class="abs" style="left:119px;top:353.2px;width:145.8px;height:19.5px;background:#0d96d8"></div>
<div class="rowbg" style="left:94px;top:377.2px;width:145.8px"></div>
<div class="abs" style="left:126px;top:307.2px;width:56.8px;height:15.6px;background:#959595"></div>
<!-- labels -->
<div class="rt" style="left:97.6px;top:189px">CAM Root</div>
<div class="rt" style="left:91.2px;top:213px">Units: mm</div>
<div class="rt" style="left:91.2px;top:237px">Named Views</div>
<div class="rt" style="left:116px;top:261px">Models</div>
<div class="rt" style="left:116px;top:285px">Setups</div>
<div class="rt" style="left:133.6px;top:308.8px;color:#fff;font-weight:bold;">Setup1</div>
<div class="rt" style="left:152px;top:333.4px">[T1] 2D Contour1</div>
<div class="rt" style="left:152px;top:357.4px;color:#fff">[T1] 2D Contour1 (2)</div>
<div class="rt" style="left:127px;top:381.400px;letter-spacing:-.1px">[Rapid out] [T2] Drill1</div>
<svg style="left:0;top:150px" width="310" height="260" viewBox="0 150 310 260">
<defs>
  <linearGradient id="gExp" x1="0" y1="0" x2="1" y2="1"><stop offset="0" stop-color="#ffffff"/><stop offset=".5" stop-color="#b4b4b4"/><stop offset="1" stop-color="#3c3c3c"/></linearGradient>
  <linearGradient id="gWarn" x1="0" y1="0" x2="0" y2="1"><stop offset="0" stop-color="#fff27a"/><stop offset="1" stop-color="#f5c518"/></linearGradient>
  <g id="eye"><path d="M0 5q8-9.600 16.200 0q-8.200 9.600-16.200 0z" fill="#9b9b9b"/><circle cx="8.100" cy="5" r="3.300" fill="#e4e4e4"/><circle cx="8.100" cy="5" r="1.700" fill="#9b9b9b"/></g>
  <g id="expd"><path d="M0.400 11.200l10.800-11.200v11.200z" fill="url(#gExp)" stroke="#2a2a2a" stroke-width=".9" stroke-linejoin="round"/></g>
  <g id="expc"><path d="M.6.600l8.400 6.200-8.400 6.400z" fill="#e6e6e6" stroke="#2a2a2a" stroke-width="1.100" stroke-linejoin="round"/></g>
  <g id="comp" stroke="#3a3a3a" stroke-width="1" stroke-linejoin="round" fill="#eef0f4">
    <path d="M1.500 .600h6.600l1.800 1.800v4.400h4l1.800 1.800v6l-1.800 1.600h-12.400l-1.200-1.200v-12.600z"/>
    <path d="M.800 7.400h5.400v8.400M6.200 7.400l1.800-1.600M6.800 9.800h5.600v5.800M12.400 9.800l1.600-1.400" fill="none" stroke="#a4a8b2" stroke-width=".8"/>
  </g>
  <g id="ofold" stroke="#4a4a4a" stroke-width="1" fill="none" stroke-linejoin="round">
    <path d="M.600 12.400v-11.800h4.600l.8 1.400h5.600"/>
    <path d="M4.600 4.800a3.600 3.600 0 0 1 7 0" stroke="#2b8fe6"/>
    <path d="M5.400 6a2.800 2.800 0 0 1 5.400 0" stroke="#9ccdf0" stroke-width=".8"/>
    <path d="M.600 12.400l3.400-7h11.400l-3.200 7z" fill="#f4f4f4" fill-opacity=".8"/>
  </g>
  <g id="warn"><path d="M7.800 .800q.8-1.200 1.600 0l6.600 11.400q.6 1.400-.8 1.600h-13.400q-1.400-.2-.8-1.600z" fill="url(#gWarn)" stroke="#e0a800" stroke-width=".9"/><path d="M8.600 4v5.200" stroke="#222" stroke-width="1.700"/><circle cx="8.600" cy="11.200" r="1" fill="#222"/></g>
</defs>
<!-- header icons -->
<path d="M14.200 164.900l-5 3 5 3zM19.400 164.900l-5 3 5 3z" fill="#2a2a2a"/>
<circle cx="287.400" cy="167.400" r="4.400" fill="#1a1a1a"/><path d="M284.600 167.400h5.600" stroke="#f2f2f2" stroke-width="1.400"/>
<path d="M299.600 162v10.600" stroke="#333" stroke-width="1"/><path d="M301.200 164v6" stroke="#888" stroke-width=".8"/>
<!-- CAM root -->
<use href="#expd" x="20.400" y="189.400"/>
<use href="#eye" x="43" y="190"/>
<use href="#comp" x="68" y="187"/>
<!-- Units -->
<path d="M62 212h8.400l3.800 3.600v7.400h-12.200z" fill="#e8eaee" stroke="#3a3a3a" stroke-width="1" stroke-linejoin="round"/>
<path d="M70.400 212v3.600h3.800" fill="none" stroke="#3a3a3a" stroke-width=".8"/>
<rect x="61.400" y="223.400" width="14" height="3.200" fill="#f7c520" stroke="#c88a00" stroke-width=".8"/>
<path d="M63.600 223.400v1.600M65.800 223.400v1.600M68 223.400v1.600M70.200 223.400v1.600M72.400 223.400v1.600" stroke="#8a5a00" stroke-width=".6"/>
<!-- Named views -->
<use href="#expc" x="40" y="236.400"/>
<path d="M61 236.600h6.400l1.200 1.600h8.400v11h-16z" fill="#9b9b9b"/><path d="M61 237.600h6" stroke="#c4c4c4" stroke-width=".8"/>
<!-- Models -->
<use href="#expc" x="40" y="260.400"/>
<use href="#eye" x="61.200" y="262"/>
<use href="#comp" x="86" y="259"/>
<!-- Setups -->
<use href="#expd" x="38.400" y="285.400"/>
<use href="#eye" x="61.200" y="286"/>
<use href="#ofold" x="86" y="284.600"/>
<!-- Setup1 -->
<use href="#expd" x="56.600" y="309.400"/>
<use href="#eye" x="79.200" y="310"/>
<use href="#ofold" x="104.200" y="308.600"/>
<circle cx="193.400" cy="315.600" r="5.800" fill="#fff" stroke="#2a2a2a" stroke-width="1.200"/><circle cx="193.400" cy="315.600" r="2.200" fill="#2a2a2a"/>
<!-- Contour1 -->
<use href="#expc" x="76" y="332.400"/>
<use href="#warn" x="96.400" y="331.600"/>
<path d="M122.600 339.400l7.400 5.400 7.400-5.400-7.400-5.200z" fill="none" stroke="#2b8fe6" stroke-width="1"/>
<path d="M124.400 337l5.600-4.600 5.600 4.600-5.600 4.400z" fill="#fbfbfb" stroke="#6e6e6e" stroke-width=".9"/>
<path d="M124.400 337.200v2l5.600 4.400 5.600-4.400v-2l-5.600 4.400z" fill="#4f9fe0"/>
<!-- Contour1 (2) -->
<use href="#expc" x="76" y="356.400"/>
<use href="#warn" x="96.400" y="355.600"/>
<path d="M124.400 360.800l5.600-4.600 5.600 4.600-5.600 4.400z" fill="#fff"/>
<path d="M124.400 361v2.200l5.600 4.400 5.600-4.400v-2.200l-5.600 4.400z" fill="#7cc4f0"/>
<!-- Drill -->
<path d="M76.600 380.600l8.400 6.200-8.400 6.400z" fill="#f4f4f4" stroke="#9a9a9a" stroke-width="1.100" stroke-linejoin="round"/>
<g stroke-linejoin="round">
  <path d="M102.400 390.400h5.400v2.600q0 1.700-2.700 1.700t-2.700-1.700z" fill="#c4c4c4" stroke="#606060" stroke-width=".9"/>
  <path d="M101.300 381.300H112.600L109 387H97.340Z" fill="#f8f8f8"/>
  <path d="M97.340 387H109V390.400H97.340Z" fill="#dedede"/>
  <path d="M109 387L112.600 381.300V383.900L109 390.400Z" fill="#cfcfcf"/>
  <path d="M97.340 386.600L101.300 381.300H112.600V383.900L109 390.400H97.340Z" fill="none" stroke="#555" stroke-width="1"/>
  <path d="M102.400 381q0-1.800 2.700-1.800t2.700 1.800v2.600q0 1.700-2.700 1.700t-2.700-1.700z" fill="#cdcdcd" stroke="#606060" stroke-width=".9"/>
  <path d="M102.600 384.600v5.800M107.600 384.600v5.800" stroke="#1e90ea" stroke-width="1.100"/>
</g>
</svg>
<!-- notify.html -->
<div class="abs" style="left:828px;top:155px;width:265px;height:24px;background:#f2f2f2;"></div>
<div class="abs" style="left:1042px;top:155.500px;width:2px;height:23px;background:#d0d0d0;"></div>
<svg style="left:828px;top:155px" width="30" height="24" viewBox="828 155 30 24">
  <path d="M839.600 159.400l8 14.200h-16z" fill="#f9a01c" stroke="#f9a01c" stroke-width=".8" stroke-linejoin="round"/>
  <path d="M839.600 163.400v5.600" stroke="#fff" stroke-width="1.700"/><circle cx="839.600" cy="171.200" r="1" fill="#fff"/>
</svg>
<div class="rt" style="left:853px;top:161px;font-weight:bold;color:#333">Unsaved:</div>
<div class="rt" style="left:923px;top:161px;color:#333">Changes may be lost</div>
<div class="rt" style="left:1056.200px;top:161px;color:#1a73c8">Save</div>
<!-- viewcube.html -->
<div class="abs" style="left:1830px;top:188px;width:52.500px;height:52.500px;box-sizing:border-box;border:1px solid #9c9c9c;background:rgba(240,240,240,.9);box-shadow:0 0 9px 2px rgba(120,120,120,.28);"></div>
<div class="abs" style="left:1840px;top:198px;width:32.700px;height:32.700px;background:rgba(226,229,234,.85);"></div>
<div class="abs" style="left:1836px;top:206.500px;width:40px;height:16px;line-height:16px;text-align:center;font-size:12.600px;color:#8c9098;transform:rotate(90deg);letter-spacing:.3px">TOP</div>
<div class="abs" style="left:1822.400px;top:178.800px;font-size:14px;line-height:14px;color:#6a6aff;font-weight:bold;transform:scaleX(.82);">Z</div>
<div class="abs" style="left:1886px;top:185.500px;font-size:14px;line-height:14px;color:#6af06a;transform:scaleX(.75);">Y</div>
<div class="abs" style="left:1830px;top:242.300px;font-size:14px;line-height:14px;color:#ff7070;transform:scaleX(.75);">X</div>
<div class="abs" style="left:1883.300px;top:192.300px;width:2px;height:2px;background:#6af06a"></div>
<div class="abs" style="left:1834.300px;top:241px;width:1.500px;height:1.500px;background:#ff7070"></div>
<!-- simulate.html -->
<div id="sim"></div>
<div class="abs" style="left:1666px;top:298.900px;width:250px;height:1px;background:#d0d0d0"></div>
<svg style="left:1660px;top:270px" width="260" height="680" viewBox="1660 270 260 680">
<path d="M1668.300 283.500v7" stroke="#999" stroke-width=".8"/><path d="M1670.400 282.200v10" stroke="#333" stroke-width="1.100"/>
<circle cx="1682" cy="287" r="4.400" fill="#1a1a1a"/><path d="M1679.300 287h5.400" stroke="#f2f2f2" stroke-width="1.400"/>
<path d="M1901 284l4.600 3-4.600 3zM1906.400 284l4.600 3-4.600 3z" fill="#1a1a1a"/>
<path d="M1667.500 326.700v-24.200h74.500v24.200" fill="#f2f2f2" stroke="#c2c2c2" stroke-width="1"/>
<path d="M1742 326.700h174" stroke="#c2c2c2" stroke-width="1"/>
<path d="M1798.400 304v21M1881.400 304v21" stroke="#d0d0d0" stroke-width="1"/>
<path d="M1674.200 315q7.900-9.600 15.800 0q-7.900 9.600-15.800 0z" fill="#7c7c7c"/><circle cx="1682.100" cy="315" r="3.300" fill="#f2f2f2"/><circle cx="1682.100" cy="315" r="1.800" fill="#7c7c7c"/>
<circle cx="1756.600" cy="314.700" r="6.900" fill="#6a6a6a"/><path d="M1756.600 313.600v5" stroke="#f2f2f2" stroke-width="1.800"/><circle cx="1756.600" cy="310.800" r="1.100" fill="#f2f2f2"/>
<path d="M1805.200 319.400h2.600v3.400h-2.600zM1809 317h2.600v5.800h-2.600zM1812.800 318h2.600v4.800h-2.600zM1816.600 313.400h2.900v9.400h-2.900z" fill="#6a6a6a"/><path d="M1805.300 316l4.700-4.800 3.200 2.600 6.600-6.400" fill="none" stroke="#6a6a6a" stroke-width="1"/>
<path d="M1676.0 339.6l6.200 4.200-6.200 4.200z" fill="#222"/>
<path d="M1676.0 381.1h9l-4.500 5.900z" fill="#222"/>
<path d="M1676.0 571.1h9l-4.500 5.900z" fill="#222"/>
<path d="M1676.0 791.1h9l-4.500 5.900z" fill="#222"/>
<path d="M1676.0 861.1h9l-4.500 5.900z" fill="#222"/>
<defs><linearGradient id="gTh" x1="0" y1="0" x2="0" y2="1"><stop offset="0" stop-color="#f6f6f6"/><stop offset=".45" stop-color="#d8d8d8"/><stop offset="1" stop-color="#7a7a7a"/></linearGradient></defs>
<rect x="1780.8" y="690.9" width="92.2" height="5" rx="2.500" fill="#4c4c4c"/><rect x="1780.8" y="690.9" width="31.1" height="5" rx="2.500" fill="#7896d6"/><path d="M1811.9 686.3l6.400 6.600v4.600q0 2.400-2.400 2.400h-8q-2.400 0-2.400-2.400v-4.600z" fill="url(#gTh)" stroke="#555" stroke-width=".9" stroke-linejoin="round"/>
<rect x="1783" y="891.1" width="89.3" height="5" rx="2.500" fill="#4c4c4c"/><rect x="1783" y="891.1" width="71.8" height="5" rx="2.500" fill="#7896d6"/><path d="M1854.8 886.5l6.400 6.600v4.600q0 2.400-2.400 2.400h-8q-2.400 0-2.400-2.400v-4.600z" fill="url(#gTh)" stroke="#555" stroke-width=".9" stroke-linejoin="round"/>
</svg>
<div class="sl" style="left:1691.300px;top:281px;color:#555">SIMULATE</div>
<div class="sl" style="left:1696px;top:307.800px">Display</div>
<div class="sl" style="left:1771px;top:307.800px">Info</div>
<div class="sl" style="left:1827px;top:307.800px">Statistics</div>
<div class="ck" style="left:1692.2px;top:336.5px"></div><div class="sl sb" style="left:1712.300px;top:338.3px">Tool</div>
<div class="hsep" style="top:363.400px"></div>
<div class="ck" style="left:1692.2px;top:376.4px"></div><svg style="left:1692.2px;top:376.4px" width="13" height="13" viewBox="0 0 13 13"><path d="M2.800 6.600l2.600 3.200 4.800-7" fill="none" stroke="#1a1a1a" stroke-width="1.400"/></svg><div class="sl sb" style="left:1712.300px;top:378.2px">Toolpath</div>
<div class="sl" style="left:1679.200px;top:408.3px">Show links</div><div class="ck" style="left:1778.2px;top:407.1px"></div><svg style="left:1778.2px;top:407.1px" width="13" height="13" viewBox="0 0 13 13"><path d="M2.800 6.600l2.600 3.200 4.800-7" fill="none" stroke="#1a1a1a" stroke-width="1.400"/></svg>
<div class="sl" style="left:1679.200px;top:438.3px">Show leads</div><div class="ck" style="left:1778.2px;top:437.1px"></div><svg style="left:1778.2px;top:437.1px" width="13" height="13" viewBox="0 0 13 13"><path d="M2.800 6.600l2.600 3.200 4.800-7" fill="none" stroke="#1a1a1a" stroke-width="1.400"/></svg>
<div class="sl" style="left:1679.200px;top:468.3px">Show cutting mo...</div><div class="ck" style="left:1778.2px;top:467.1px"></div><svg style="left:1778.2px;top:467.1px" width="13" height="13" viewBox="0 0 13 13"><path d="M2.800 6.600l2.600 3.200 4.800-7" fill="none" stroke="#1a1a1a" stroke-width="1.400"/></svg>
<div class="sl" style="left:1679.200px;top:498.3px">Show points</div><div class="ck" style="left:1778.2px;top:497.1px"></div>
<div class="sl" style="left:1679.200px;top:528.3px">Mode</div><div class="dd" style="top:520.4px"><span>Toolpath before ...</span><i></i></div>
<div class="hsep" style="top:553.600px"></div>
<div class="ck" style="left:1692.2px;top:566.4px"></div><svg style="left:1692.2px;top:566.4px" width="13" height="13" viewBox="0 0 13 13"><path d="M2.800 6.600l2.600 3.200 4.800-7" fill="none" stroke="#1a1a1a" stroke-width="1.400"/></svg><div class="sl sb" style="left:1712.300px;top:568.2px">Stock</div>
<div class="sl" style="left:1679.200px;top:598.3px">Mode</div><div class="dd" style="top:590.4px"><span>Standard</span><i></i></div>
<div class="sl" style="left:1679.200px;top:628.3px">Colorization</div><div class="dd" style="top:620.4px"><span>Operation</span><i></i></div>
<div class="sl" style="left:1679.200px;top:658.3px">Material</div><div class="dd" style="top:650.4px"><span>Plastic Vinyl</span><i></i></div>
<div class="sl" style="left:1679.200px;top:688.3px">Accuracy</div>
<div class="sl" style="left:1679.200px;top:718.3px">Transparent</div><div class="ck" style="left:1778.2px;top:717.1px"></div>
<div class="sl" style="left:1679.200px;top:748.3px">Stop on collision</div><div class="ck" style="left:1778.2px;top:747.1px"></div>
<div class="hsep" style="top:773.400px"></div>
<div class="sl sb" style="left:1691.300px;top:788.2px">View</div>
<div class="sl" style="left:1679.200px;top:818.3px">Viewpoint</div><div class="dd" style="top:810.4px"><span>Model</span><i></i></div>
<div class="hsep" style="top:843.600px"></div>
<div class="sl sb" style="left:1691.300px;top:858.2px">Model</div>
<div class="sl" style="left:1679.200px;top:888.3px">Opacity</div>
<div class="abs" style="left:1666px;top:910px;width:250px;height:1px;background:#8c8c8c"></div>
<div class="abs" style="left:1844px;top:919.300px;width:60px;height:18.500px;box-sizing:border-box;border:1px solid #c4c4c4;background:#ececec;text-align:center;font-size:12px;line-height:18.200px;color:#6a6a6a;">Close</div>
<!-- bottom.html -->
<div class="abs" style="left:841px;top:1039.700px;width:236.500px;height:24.200px;background:#f1f1f1;"></div>
<svg style="left:838px;top:1034px" width="244" height="34" viewBox="838 1034 244 34">
<defs>
  <radialGradient id="gLens" cx=".4" cy=".35" r=".7"><stop offset="0" stop-color="#fff"/><stop offset="1" stop-color="#b8dce8"/></radialGradient>
</defs>
<g fill="#222">
  <path d="M865.300 1050h5.600l-2.800 3.600zM976.600 1050h5.600l-2.800 3.600zM1006.600 1050h5.600l-2.800 3.600zM1037.600 1050h5.600l-2.800 3.600zM1068.400 1050h5.600l-2.800 3.600z"/>
</g>
<!-- orbit -->
<path d="M852.400 1046.800v12" stroke="#222" stroke-width="2.600"/><path d="M852.400 1046.800v12" stroke="#fff" stroke-width="1"/>
<path d="M849.600 1047.600l2.800-3.400 2.800 3.400z" fill="#fff" stroke="#222" stroke-width=".8"/>
<path d="M849.400 1050q-4.600.8-4.600 2.600q0 2.200 5.400 2.800M855.400 1050q4.400.8 4.400 2.600q0 2.400-7 2.800" fill="none" stroke="#222" stroke-width="1.200"/>
<path d="M850.200 1053.200l-3.800 2.400 3.800 2.400z" fill="#222"/>
<!-- look at -->
<path d="M877.400 1049.400h15.400v9.800h-15.400z" fill="#eef0f4" stroke="#3a3f4a" stroke-width="1.100"/>
<path d="M880.600 1053h9v3.600h-9z" fill="#a8aebc" stroke="#3a3f4a" stroke-width="1"/>
<path d="M879.400 1049.200l3.600-4.200 2.400 1.800 4-2 .6 4.400" fill="#d8dce4" stroke="#3a3f4a" stroke-width=".9" stroke-linejoin="round"/>
<!-- hand -->
<path d="M906.600 1052.800q-2.400-2.400-3.200-1.600-.8 1 1 3l3 3.800q1.400 1.600 3.600 1.600h3.600q2.600-.4 3.200-3.600l1-6.400q.2-1.600-.8-1.700-1-.1-1.400 1.500l-.6 2.400.2-5.400q0-1.400-1-1.400t-1.200 1.400l-.4 4.600-.4-5.600q-.1-1.300-1.100-1.300t-1.100 1.300l0 5.600-.9-4.600q-.3-1.300-1.200-1.100-1 .2-.8 1.600z" fill="#fff" stroke="#222" stroke-width=".9" stroke-linejoin="round"/>
<!-- zoom +- -->
<circle cx="934.600" cy="1050.800" r="5" fill="url(#gLens)" stroke="#3a3f4a" stroke-width="1.100"/>
<path d="M938.200 1054.600l4 4" stroke="#3a3f4a" stroke-width="2.400" stroke-linecap="round"/>
<path d="M940.600 1046.600h4.400M942.800 1044.400v4.400M940.800 1050.600h4" stroke="#222" stroke-width=".9"/>
<!-- zoom window -->
<rect x="955.400" y="1044.600" width="15.400" height="14.600" fill="none" stroke="#222" stroke-width=".9" stroke-dasharray="2 1.400"/>
<circle cx="961.800" cy="1050.600" r="6" fill="url(#gLens)" stroke="#3a3f4a" stroke-width="1.200"/>
<path d="M966.200 1055.200l4 4" stroke="#3a3f4a" stroke-width="2.600" stroke-linecap="round"/>
<!-- display -->
<path d="M988.600 1045h15.400v11.600h-15.400z" fill="#f4f4f4" stroke="#3a3f4a" stroke-width="1.100"/>
<path d="M990.600 1047h11.400v7.600h-11.400z" fill="#8fb0e0" stroke="#5a78b0" stroke-width=".6"/>
<path d="M994 1056.600h4.600v1.600h2v1.400h-8.600v-1.400h2z" fill="#e4e4e4" stroke="#8a8a8a" stroke-width=".5"/>
<!-- grid -->
<path d="M1019.500 1044.500h15v15h-15z" fill="#e8eaf0" stroke="#3a3f4a" stroke-width="1"/>
<path d="M1019.500 1052h15v7.500h-15z" fill="#b4bacb"/>
<path d="M1022.500 1044.500v15M1025.500 1044.500v15M1028.500 1044.500v15M1031.500 1044.500v15M1019.500 1047.500h15M1019.500 1050.500h15M1019.500 1053.500h15M1019.500 1056.500h15" stroke="#4a5060" stroke-width=".8"/>
<!-- viewports -->
<path d="M1050.200 1048.800l3.400-3.600h11.600v10.800l-3.400 3.400h-11.600z" fill="#f4f4f4" stroke="#3a3f4a" stroke-width="1" stroke-linejoin="round"/>
<path d="M1050.200 1048.800h11.600v10.600h-11.600z" fill="#8fb0e0" stroke="#3a3f4a" stroke-width="1"/>
<path d="M1061.800 1048.800l3.400-3.600" stroke="#3a3f4a" stroke-width="1"/>
<path d="M1052 1056.400l3-3.400a1.600 1.600 0 0 1 2.600 1.800l-3 3.400a1.600 1.600 0 0 1-2.600-1.800z" fill="#fff" stroke="#3a3f4a" stroke-width=".7"/>
</svg>
<div class="abs" style="left:0;top:1068px;width:1177px;height:12px;background:#808080;"></div>
<div class="abs" style="left:1177px;top:1068px;width:743px;height:12px;background:#b0b0b0;border-left:1px solid #d8d8d8;box-sizing:border-box"></div>
<div class="abs" style="left:1917.500px;top:1068px;width:2.500px;height:12px;background:#3a3a3a;"></div>

</body></html>
